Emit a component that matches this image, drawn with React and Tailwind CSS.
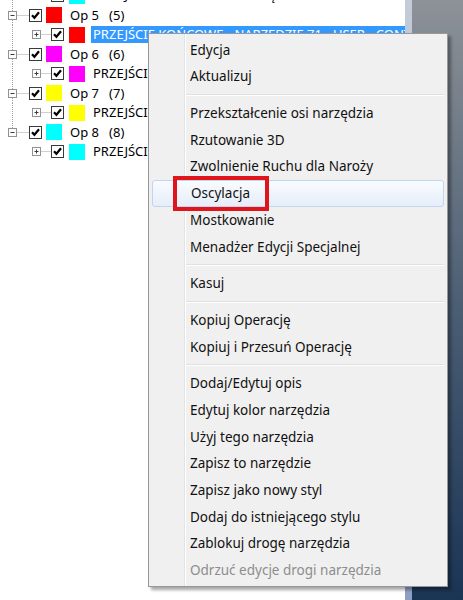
import React from 'react';

const treeFont = { fontFamily: '"Noto Sans", "DejaVu Sans", sans-serif' };

function Checkbox() {
  return (
    <svg width="13" height="13" viewBox="0 0 13 13" className="shrink-0">
      <rect x="0.5" y="0.5" width="12" height="12" fill="#fff" stroke="#3a3a3a" />
      <path d="M3 6.2 L5.4 8.8 L10 3.2" fill="none" stroke="#000" strokeWidth="2.2" />
    </svg>
  );
}

function Connector({ child, plus, last }) {
  const w = child ? 51 : 29;
  const bx = child ? 32.5 : 8.5;
  return (
    <svg width={w} height="19.5" viewBox={`0 0 ${w} 19.5`} className="shrink-0">
      {!(child && last) && (
        <line x1="12.5" y1="0" x2="12.5" y2={!child && last ? 9.75 : 19.5} stroke="#a0a0a0" strokeDasharray="1 1" />
      )}
      <line x1={bx + 8} y1="9.5" x2={w} y2="9.5" stroke="#a0a0a0" strokeDasharray="1 1" />
      <rect x={bx} y="5.5" width="8" height="8" fill="#fdfdfd" stroke="#929292" />
      <line x1={bx + 2} y1="9.5" x2={bx + 6} y2="9.5" stroke="#3c3c3c" />
      {plus && <line x1={bx + 4} y1="7.5" x2={bx + 4} y2="11.5" stroke="#3c3c3c" />}
    </svg>
  );
}

function OpRow({ color, n, last }) {
  return (
    <div className="flex items-center h-[19.5px]">
      <Connector last={last} />
      <Checkbox />
      <div className="w-[16px] h-[16px] ml-[4px] shrink-0" style={{ background: color }} />
      <span className="ml-[8px] text-[13px] text-black whitespace-pre">{`Op ${n}   (${n})`}</span>
    </div>
  );
}

function ChildRow({ color, selected, last }) {
  return (
    <div className="flex items-center h-[19.5px]">
      <Connector child plus last={last} />
      <Checkbox />
      <div className="w-[16px] h-[16px] ml-[5px] shrink-0" style={{ background: color }} />
      <span
        className={
          'ml-[6px] px-[2px] text-[13px] whitespace-nowrap leading-[17px] ' +
          (selected ? 'bg-[#3399ff] text-white' : 'text-black')
        }
      >
        PRZEJŚCIE KOŃCOWE - NARZĘDZIE 71 - USER - CONTOUR
      </span>
    </div>
  );
}

const items = [
  'Edycja',
  'Aktualizuj',
  '-',
  'Przekształcenie osi narzędzia',
  'Rzutowanie 3D',
  'Zwolnienie Ruchu dla Naroży',
  'Oscylacja',
  'Mostkowanie',
  'Menadżer Edycji Specjalnej',
  '-',
  'Kasuj',
  '-',
  'Kopiuj Operację',
  'Kopiuj i Przesuń Operację',
  '-',
  'Dodaj/Edytuj opis',
  'Edytuj kolor narzędzia',
  'Użyj tego narzędzia',
  'Zapisz to narzędzie',
  'Zapisz jako nowy styl',
  'Dodaj do istniejącego stylu',
  'Zablokuj drogę narzędzia',
  'Odrzuć edycje drogi narzędzia',
];

function ContextMenu() {
  return (
    <div
      className="absolute left-[148px] top-[33px] w-[300px] border border-[#979797] py-[2.5px] bg-[linear-gradient(to_right,#f0f0f0_35px,#e2e3e3_35px,#e2e3e3_36px,#ffffff_36px,#ffffff_37px,#f0f0f0_37px)] shadow-[3px_3px_3px_rgba(0,0,0,0.35)]"
      style={{ fontFamily: '"Noto Sans", "Open Sans", sans-serif' }}
    >
      {items.map((label, i) => {
        if (label === '-') {
          return (
            <div key={i} className="h-[10px] flex flex-col justify-center ml-[37px] mr-[3px]">
              <div className="h-px bg-[#e0e0e0]" />
              <div className="h-px bg-white" />
            </div>
          );
        }
        const hot = label === 'Oscylacja';
        const disabled = label.startsWith('Odrzuć');
        return (
          <div
            key={i}
            className={
              'relative h-[26.7px] mx-[3px] pl-[38px] flex items-center text-[13.5px] ' +
              (hot
                ? 'rounded-[3px] border border-[#c0d6f0] bg-gradient-to-b from-[#f9fbfe] to-[#e6eef9] pl-[37px] '
                : '') +
              (disabled ? 'text-[#8d8d8d]' : 'text-[#111]')
            }
          >
            {label}
            {hot && (
              <div className="absolute left-[20px] top-[-5px] w-[96px] h-[35px] border-[4px] border-[#e0151c]" />
            )}
          </div>
        );
      })}
    </div>
  );
}

export default function App() {
  return (
    <div className="relative flex w-[463px] h-[600px] overflow-hidden bg-white">
      <div className="w-[405px] h-full bg-white overflow-hidden" style={treeFont}>
        <div className="-mt-[14px] flex flex-col">
          <ChildRow color="#00ffff" />
          <OpRow color="#ff0000" n={5} />
          <ChildRow color="#ff0000" selected />
          <OpRow color="#ff00ff" n={6} />
          <ChildRow color="#ff00ff" />
          <OpRow color="#ffff00" n={7} />
          <ChildRow color="#ffff00" />
          <OpRow color="#00ffff" n={8} last />
          <ChildRow color="#00ffff" last />
        </div>
      </div>
      <div className="w-[7px] h-full bg-gradient-to-b from-[#c3ccd8] via-[#a7b4c8] to-[#8d9fc3]" />
      <div className="flex-1 h-full bg-gradient-to-b from-[#8d9297] via-[#4d5f74] to-[#1a3454]" />
      <ContextMenu />
    </div>
  );
}
